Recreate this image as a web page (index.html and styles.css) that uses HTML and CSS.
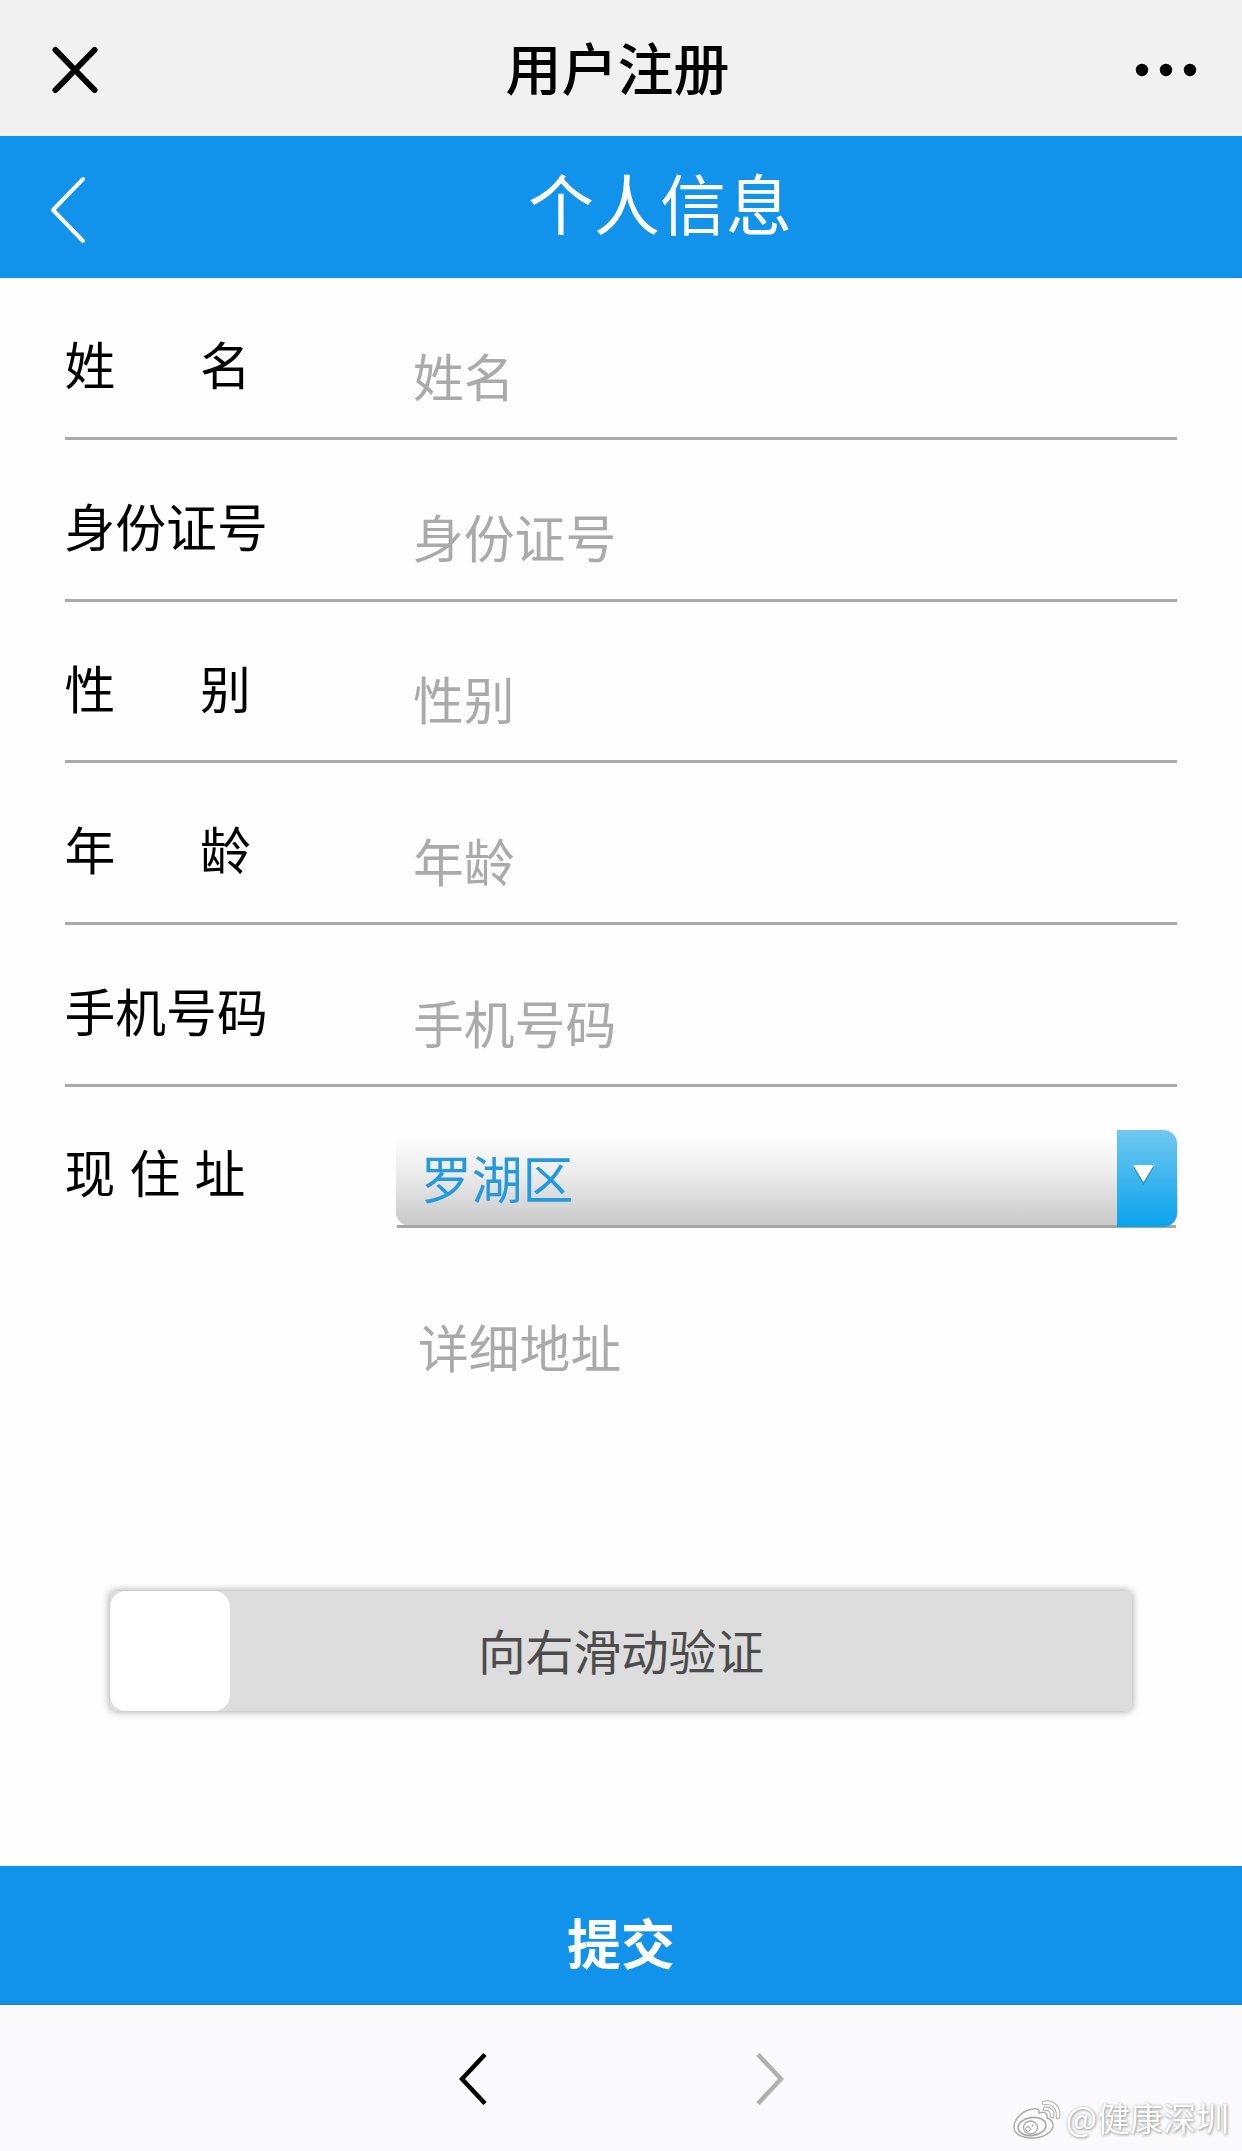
FILE: index.html
```html
<!DOCTYPE html>
<html lang="zh-CN">
<head>
<meta charset="utf-8">
<title>用户注册</title>
<link rel="stylesheet" href="styles.css">
</head>
<body>
<div class="page">
  <header class="app-bar">
    <svg class="icon-close" viewBox="0 0 50 50" fill="none" stroke="#000" stroke-width="6" stroke-linecap="round"><path d="M5.500 5 44.500 45M44.500 5 5.500 45"/></svg>
    <h1 class="app-title">用户注册</h1>
    <svg class="icon-more" viewBox="0 0 62 14"><circle cx="7" cy="7" r="6.200"/><circle cx="31" cy="7" r="6.200"/><circle cx="55" cy="7" r="6.200"/></svg>
  </header>
  <nav class="section-bar">
    <svg class="icon-back" viewBox="0 0 38 70" fill="none" stroke="#fff" stroke-width="4" stroke-linecap="round" stroke-linejoin="round"><path d="M34 4 4 35 34 66"/></svg>
    <h2 class="section-title">个人信息</h2>
  </nav>
  <main class="form">
    <div class="row"><div class="label spread"><span>姓</span><span>名</span></div><div class="field">姓名</div></div>
    <div class="row"><div class="label">身份证号</div><div class="field">身份证号</div></div>
    <div class="row"><div class="label spread"><span>性</span><span>别</span></div><div class="field">性别</div></div>
    <div class="row"><div class="label spread"><span>年</span><span>龄</span></div><div class="field">年龄</div></div>
    <div class="row"><div class="label">手机号码</div><div class="field">手机号码</div></div>
    <div class="address">
      <div class="label tracked">现住址</div>
      <div class="address-fields">
        <div class="select">
          <div class="select-value">罗湖区</div>
          <div class="select-button"><svg class="icon-caret" viewBox="0 0 22 21"><path d="M0 2h22L11 21z" fill="#2878a8" opacity=".7"/><path d="M0 0h22L11 18z" fill="#fff"/></svg></div>
        </div>
        <div class="detail">详细地址</div>
      </div>
    </div>
    <div class="slider"><div class="slider-handle"></div><div class="slider-text">向右滑动验证</div></div>
  </main>
  <div class="submit">提交</div>
  <footer class="browser-nav">
    <svg class="icon-nav" viewBox="0 0 28 52" fill="none" stroke="#000" stroke-width="4.500"><path d="M26 1.500 3 26 26 50.500"/></svg>
    <svg class="icon-nav" viewBox="0 0 28 52" fill="none" stroke="#b0b0b1" stroke-width="4.500"><path d="M2 1.500 25 26 2 50.500"/></svg>
  </footer>
  <div class="watermark">
    <svg class="icon-weibo" viewBox="0 0 50 42">
      <path d="M20 10C10 11 1 20 1 28c0 7 8 11 18 11 12 0 21-6 21-13 0-4-3-6-6-7 1-4-2-7-8-5 1-4-2-5-6-4z" fill="#fff" stroke="#aaa" stroke-width="1.400"/>
      <ellipse cx="19" cy="27.500" rx="14" ry="9" fill="#fff" stroke="#a5a5a5" stroke-width="1.600" transform="rotate(-8 19 27.500)"/>
      <ellipse cx="17.500" cy="28.500" rx="7" ry="6.500" fill="#fff" stroke="#aaa" stroke-width="1.300"/>
      <circle cx="15" cy="30" r="2.300" fill="none" stroke="#999"/><circle cx="19.500" cy="26.500" r="1" fill="#999"/>
      <path d="M31 4c8-2 15 4 14 14M32 10c4-1 8 2 7 7" fill="none" stroke="#aaa" stroke-width="4.500" stroke-linecap="round"/>
      <path d="M31 4c8-2 15 4 14 14M32 10c4-1 8 2 7 7" fill="none" stroke="#fff" stroke-width="2.600" stroke-linecap="round"/>
    </svg>
    <span class="watermark-text">@健康深圳</span>
  </div>
</div>
</body>
</html>
```
FILE: styles.css
```css
* { box-sizing: border-box; }
body {
  margin: 0;
  background: #fefefe;
  color: #000;
  font-family: "Noto Sans CJK SC", sans-serif;
}
svg { display: block; flex: none; }
.page {
  position: relative;
  width: 1242px;
  height: 2151px;
  display: flex;
  flex-direction: column;
  overflow: hidden;
}
.app-bar {
  height: 136px;
  flex: none;
  display: flex;
  align-items: center;
  justify-content: space-between;
  padding: 4px 45px 0 50px;
  background: #f1f1f1;
}
.icon-close { width: 50px; height: 50px; }
.icon-more { width: 62px; height: 14px; }
.app-title {
  margin: -8px 0 0 0;
  font-size: 56px;
  line-height: 80px;
  font-weight: 500;
}
.section-bar {
  height: 142px;
  flex: none;
  display: flex;
  align-items: center;
  padding-left: 49px;
  background: #1192eb;
}
.icon-back { width: 38px; height: 70px; margin-top: 6px; }
.section-title {
  margin: -12px 0 0 441px;
  font-size: 66px;
  line-height: 90px;
  font-weight: 400;
  color: #fff;
}
.form {
  flex: 1;
  padding: 0 65px;
  font-size: 50.8px;
  line-height: 70px;
}
.row {
  height: 161.75px;
  display: flex;
  padding-top: 50px;
  border-bottom: 3px solid #aaa;
}
.label { width: 348.5px; margin-left: -.5px; flex: none; }
.spread { display: flex; gap: 84.6px; }
.tracked { letter-spacing: 14.2px; }
.field { padding-top: 11.5px; color: #aaa; }
.address { display: flex; padding-top: 49px; }
.address .label { width: 331.5px; }
.address-fields { width: 782px; flex: none; }
.select {
  height: 96px;
  display: flex;
  margin-top: -6px;
  border-radius: 14px;
  background: linear-gradient(#fefefe 5%, #ececec 45%, #cacaca 97%);
}
/* underline beneath the value, tucked under the blue button */
.select::after {
  content: "";
  width: 779px;
  height: 3px;
  flex: none;
  align-self: flex-end;
  margin: 0 0 -2px -780px;
  background: #a6a6a6;
}
.select-value { width: 721px; flex: none; padding: 12px 0 0 25px; color: #2499dc; }
.select-button {
  position: relative;
  z-index: 1;
  flex: none;
  width: 60px;
  height: 97px;
  padding: 35px 0 0 16px;
  border-radius: 0 14px 14px 0;
  background: linear-gradient(#70c8f2, #0aa3ec);
}
.icon-caret { width: 21px; height: 20px; }
.detail { padding: 85px 0 0 22px; color: #aaa; }
.slider {
  width: 1022px;
  height: 120px;
  display: flex;
  margin: 210px 0 0 45px;
  border-radius: 6px;
  background: #ddd;
  box-shadow: 0 0 8px rgba(0, 0, 0, .4);
}
.slider-handle { width: 120px; height: 120px; border-radius: 16px; background: #fff; }
.slider-text {
  padding-left: 248px;
  font-size: 47.7px;
  line-height: 117px;
  color: #4c4c4c;
}
.submit {
  height: 139px;
  flex: none;
  padding-top: 27px;
  border-bottom: 1px solid #2b7fc0;
  background: #1192eb;
  color: #fff;
  font-size: 54px;
  line-height: 97px;
  font-weight: 700;
  text-align: center;
}
.browser-nav {
  height: 146px;
  flex: none;
  display: flex;
  justify-content: center;
  gap: 269px;
  padding-top: 48px;
  background: #fafafc;
}
.icon-nav { width: 28px; height: 52px; }
.watermark {
  position: absolute;
  right: 13px;
  bottom: 10px;
  display: flex;
  align-items: center;
  gap: 3px;
}
.icon-weibo { width: 50px; height: 42px; }
.watermark-text {
  margin-top: -6px;
  font-size: 33px;
  line-height: 42px;
  color: #fff;
  text-shadow: 1px 1px 3px #999, 0 0 2px #bbb;
}
```
